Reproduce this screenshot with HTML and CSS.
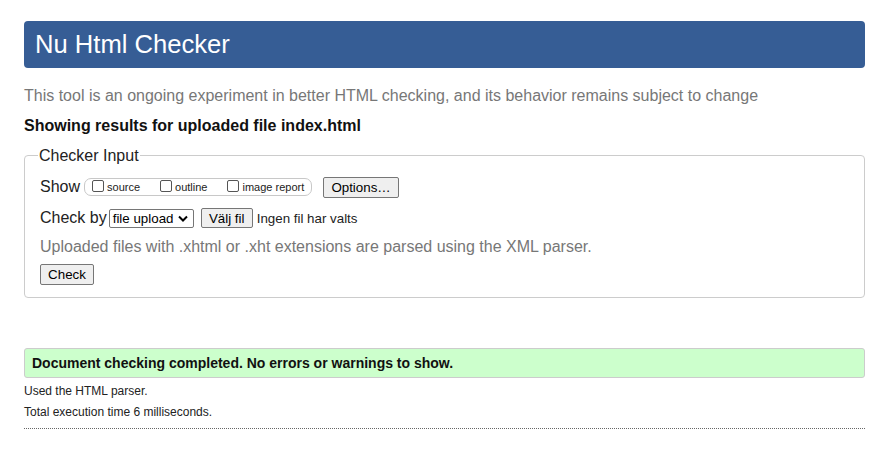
FILE: index.html
```html
<!DOCTYPE html>
<html lang="en">
<head>
<meta charset="utf-8">
<title>Nu Html Checker</title>
<link rel="stylesheet" href="styles.css">
</head>
<body>
<div class="page">
  <h1 class="header">Nu Html Checker</h1>
  <p class="intro">This tool is an ongoing experiment in better HTML checking, and its behavior remains subject to change</p>
  <p class="results-for">Showing results for uploaded file index.html</p>
  <fieldset class="input">
    <legend class="legend">Checker Input</legend>
    <div class="row first">
      <span class="label">Show</span>
      <span class="show-group">
        <label class="opt"><span class="cb"></span>source</label>
        <label class="opt"><span class="cb"></span>outline</label>
        <label class="opt"><span class="cb"></span>image report</label>
      </span>
      <button class="btn options">Options…</button>
    </div>
    <div class="row second">
      <span class="label">Check by</span>
      <span class="select">file upload<svg class="chev" width="10" height="7" viewBox="0 0 10 7"><path d="M1 1.5 L5 5.5 L9 1.5" fill="none" stroke="#000" stroke-width="2"/></svg></span>
      <button class="btn file">Välj fil</button>
      <span class="nofile">Ingen fil har valts</span>
    </div>
    <p class="note">Uploaded files with .xhtml or .xht extensions are parsed using the XML parser.</p>
    <div class="row last">
      <button class="btn check">Check</button>
    </div>
  </fieldset>
  <p class="success">Document checking completed. No errors or warnings to show.</p>
  <p class="stat">Used the HTML parser.</p>
  <p class="stat">Total execution time 6 milliseconds.</p>
  <hr class="rule">
</div>
</body>
</html>
```
FILE: styles.css
```css
html, body {
  margin: 0;
  padding: 0;
  background: #fff;
}
body {
  font-family: "Liberation Sans", Arial, sans-serif;
  color: #111;
}
.page {
  padding: 21px 24px 0 24px;
  display: flex;
  flex-direction: column;
}
.header {
  margin: 0;
  height: 47px;
  box-sizing: border-box;
  padding: 0 11px;
  background: #365d95;
  color: #fff;
  border-radius: 4px;
  font-size: 25.6px;
  font-weight: normal;
  line-height: 47px;
}
.intro {
  margin: 18px 0 0 0;
  font-size: 16px;
  line-height: 19px;
  color: #777;
}
.results-for {
  margin: 11px 0 0 0;
  font-size: 16px;
  font-weight: bold;
  line-height: 19px;
  color: #111;
}
.input {
  margin: 11px 0 0 0;
  padding: 2px 15px 13px 15px;
  border: 1px solid #ccc;
  border-radius: 4px;
}
.legend {
  padding: 0 1px;
  margin-left: -2px;
  font-size: 16px;
  line-height: 19px;
  color: #222;
}
.row {
  display: flex;
  align-items: center;
  height: 20px;
  margin-top: 9px;
}
.row.first { margin-top: 10px; }
.row.second { margin-top: 11px; }
.row.last { margin-top: 8px; }
.label {
  font-size: 16px;
  color: #222;
  margin-right: 3px;
}
.show-group {
  display: flex;
  align-items: center;
  height: 18px;
  box-sizing: border-box;
  border: 1px solid #c8c8c8;
  border-radius: 7px;
  padding: 0 0 0 7px;
  margin-left: 1px;
  gap: 20px;
  width: 228px;
}
.opt {
  display: flex;
  align-items: center;
  font-size: 11px;
  color: #222;
  gap: 3px;
}
.cb {
  width: 12px;
  height: 12px;
  box-sizing: border-box;
  border: 1px solid #555;
  border-radius: 2px;
  background: #fff;
  margin-top: -2px;
}
.btn {
  font-family: "Liberation Sans", Arial, sans-serif;
  font-size: 13.33px;
  color: #000;
  background: #efefef;
  border: 1px solid #767676;
  border-radius: 2px;
  padding: 1px 6px;
  height: 21px;
  line-height: 17px;
}
.options {
  margin-left: 11px;
  width: 76px;
}
.select {
  display: flex;
  align-items: center;
  gap: 4px;
  box-sizing: border-box;
  height: 19px;
  width: 85px;
  border: 1px solid #767676;
  border-radius: 2px;
  padding: 0 3px;
  font-size: 13.33px;
  color: #000;
  margin-left: -1px;
}
.chev { margin-left: 1px; }
.file {
  margin-left: 7px;
  width: 52px;
  height: 20px;
}
.nofile {
  margin-left: 4px;
  font-size: 13.33px;
  color: #222;
}
.note {
  margin: 9px 0 0 0;
  font-size: 16px;
  line-height: 19px;
  color: #777;
}
.check {
  width: 54px;
  height: 21px;
}
.success {
  margin: 50px 0 0 0;
  box-sizing: border-box;
  height: 30px;
  padding: 0 7px;
  background: #ccffcc;
  border: 1px solid #ccc;
  border-radius: 3px;
  font-size: 14px;
  font-weight: bold;
  line-height: 28px;
  color: #111;
}
.stat {
  margin: 5px 0 0 0;
  font-size: 12px;
  line-height: 16px;
  color: #222;
}
.stat + .stat { margin-top: 5px; }
.rule {
  margin: 8px 0 0 0;
  border: 0;
  border-top: 1px dotted #666;
  height: 0;
}
```
